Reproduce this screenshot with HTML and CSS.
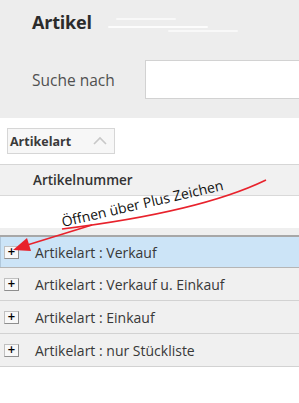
FILE: index.html
```html
<!DOCTYPE html>
<html lang="de">
<head>
<meta charset="utf-8">
<link rel="stylesheet" href="styles.css">
</head>
<body>
<div class="page">
  <div class="top">
    <div class="title-row">
      <h1 class="title">Artikel</h1>
      <div class="smudge">
        <span class="s1"></span><span class="s2"></span><span class="s3"></span>
      </div>
    </div>
    <div class="search-row">
      <span class="search-label">Suche nach</span>
      <div class="search-input"></div>
    </div>
  </div>

  <div class="group-bar">
    <div class="group-chip">
      <span>Artikelart</span>
      <svg class="chev" width="14" height="9" viewBox="0 0 14 9"><path d="M1 8 L7 2 L13 8" fill="none" stroke="#c8c8c8" stroke-width="1.6"/></svg>
    </div>
  </div>

  <div class="grid-header">Artikelnummer</div>
  <div class="filter-row"></div>
  <div class="band"></div>

  <div class="rows">
    <div class="row selected"><span class="plus">+</span><span class="label">Artikelart : Verkauf</span></div>
    <div class="row"><span class="plus">+</span><span class="label">Artikelart : Verkauf u. Einkauf</span></div>
    <div class="row"><span class="plus">+</span><span class="label">Artikelart : Einkauf</span></div>
    <div class="row"><span class="plus">+</span><span class="label">Artikelart : nur Stückliste</span></div>
  </div>

  <svg class="annotation" width="299" height="403" viewBox="0 0 299 403">
    <path d="M266 180 Q200 212 62 229" fill="none" stroke="#e8222c" stroke-width="1.6"/>
    <line x1="92" y1="225" x2="24" y2="246" stroke="#e8222c" stroke-width="1.6"/>
    <path d="M13 250 L27 238 L31 251 Z" fill="#e8222c"/>
    <text x="63" y="227" transform="rotate(-13 63 227)" class="note">Öffnen über Plus Zeichen</text>
  </svg>
</div>
</body>
</html>
```
FILE: styles.css
```css
html, body {
  margin: 0;
  padding: 0;
  background: #ffffff;
}
body {
  width: 299px;
  height: 403px;
  overflow: hidden;
  font-family: "Open Sans", "Noto Sans", sans-serif;
}
.page {
  position: relative;
  width: 299px;
  height: 403px;
}
.top {
  background: #ededed;
  height: 118px;
  display: flex;
  flex-direction: column;
}
.title-row {
  display: flex;
  align-items: center;
  height: 44px;
  padding-left: 32px;
}
.title {
  margin: 0;
  font-size: 18px;
  font-weight: 700;
  color: #2b2b2b;
  letter-spacing: -0.2px;
}
.smudge {
  position: relative;
  margin-left: 16px;
  width: 130px;
  height: 24px;
}
.smudge span {
  position: absolute;
  background: #ffffff;
  opacity: 0.8;
  height: 2px;
  border-radius: 1px;
}
.smudge .s1 { left: 8px; top: 8px; width: 60px; opacity: 0.6; }
.smudge .s2 { left: 0px; top: 16px; width: 100px; opacity: 0.8; }
.smudge .s3 { left: 60px; top: 20px; width: 70px; opacity: 0.6; }
.search-row {
  display: flex;
  align-items: center;
  margin-top: 16px;
  height: 39px;
}
.search-label {
  padding-left: 32px;
  width: 113px;
  font-size: 15.5px;
  color: #505050;
}
.search-input {
  flex: 1;
  height: 37px;
  background: #ffffff;
  border: 1px solid #d2d2d2;
  border-right: none;
}
.group-bar {
  padding: 10px 0 10px 7px;
  display: flex;
}
.group-chip {
  height: 24px;
  border: 1px solid #d6d6d6;
  background: #f7f7f7;
  display: flex;
  align-items: center;
  justify-content: space-between;
  padding: 0 7px 0 2px;
  box-sizing: content-box;
  font-size: 12.5px;
  font-weight: 700;
  color: #3a3a3a;
  width: 97px;
}
.chev { margin-top: -1px; }
.grid-header {
  height: 30px;
  background: #f1f1f1;
  border-top: 1px solid #d6d6d6;
  border-bottom: 1px solid #d9d9d9;
  display: flex;
  align-items: center;
  padding-left: 33px;
  font-size: 13.5px;
  font-weight: 600;
  color: #333;
}
.filter-row {
  height: 32px;
  background: #ffffff;
}
.band {
  height: 7px;
  background: #efefef;
}
.rows {
  display: flex;
  flex-direction: column;
}
.row {
  display: flex;
  align-items: center;
  height: 32px;
  background: #f0f0f0;
  border-bottom: 1px solid #d2d2d2;
}
.row.selected {
  background: #cce4f7;
  height: 30px;
  border-top: 2px solid #a7a7a7;
  border-bottom: 1px solid #b5b5b5;
  box-shadow: inset 1px 0 0 #b0c8dc;
}
.plus {
  width: 13px;
  height: 11px;
  margin-left: 4px;
  border: 1px solid #c0c0c0;
  border-right-color: #8e8e8e;
  border-bottom-color: #8e8e8e;
  background: #f8f8f8;
  display: flex;
  align-items: center;
  justify-content: center;
  font-family: "DejaVu Sans", sans-serif;
  font-weight: 700;
  font-size: 10px;
  line-height: 10px;
  color: #000;
}
.label {
  margin-left: 16px;
  font-size: 14px;
  color: #383838;
}
.annotation {
  position: absolute;
  left: 0;
  top: 0;
  pointer-events: none;
}
.note {
  font-family: "Open Sans", "Noto Sans", sans-serif;
  font-size: 14px;
  fill: #111;
}
```
